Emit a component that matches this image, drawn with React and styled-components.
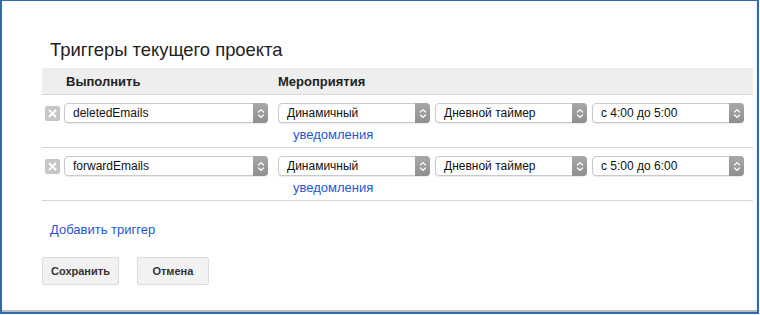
import React from "react";
import styled, { createGlobalStyle } from "styled-components";

const GlobalStyle = createGlobalStyle`
  html, body {
    margin: 0;
    padding: 0;
    background: #ffffff;
  }
  body {
    font-family: "Liberation Sans", Arial, sans-serif;
    color: #222;
  }
`;

const triggers = [
  { id: 1, fn: "deletedEmails", time: "с 4:00 до 5:00" },
  { id: 2, fn: "forwardEmails", time: "с 5:00 до 6:00" },
];

function Stepper() {
  return (
    <StepperBox>
      <svg width="8" height="11" viewBox="0 0 8 11">
        <path
          d="M1.5 4 L4 1.6 L6.5 4 M1.5 7 L4 9.4 L6.5 7"
          fill="none"
          stroke="#fff"
          strokeWidth="1.3"
          strokeLinecap="round"
          strokeLinejoin="round"
        />
      </svg>
    </StepperBox>
  );
}

function Select({ value }) {
  return (
    <SelectBox>
      <SelectLabel>{value}</SelectLabel>
      <Stepper />
    </SelectBox>
  );
}

function RemoveButton() {
  return (
    <RemoveBox>
      <svg width="9" height="9" viewBox="0 0 9 9">
        <path d="M1.5 1.5 L7.5 7.5 M7.5 1.5 L1.5 7.5" stroke="#fff" strokeWidth="2" strokeLinecap="round" />
      </svg>
    </RemoveBox>
  );
}

export default function App() {
  return (
    <>
      <GlobalStyle />
      <Frame>
        <Title>Триггеры текущего проекта</Title>
        <Table>
          <HeaderRow>
            <span />
            <HeadCell>Выполнить</HeadCell>
            <HeadCell>Мероприятия</HeadCell>
          </HeaderRow>
          {triggers.map((t) => (
            <TriggerRow key={t.id}>
              <RemoveButton />
              <Select value={t.fn} />
              <Select value="Динамичный" />
              <Select value="Дневной таймер" />
              <Select value={t.time} />
              <span />
              <span />
              <NotifyLink>уведомления</NotifyLink>
            </TriggerRow>
          ))}
        </Table>
        <AddLink>Добавить триггер</AddLink>
        <Actions>
          <Button>Сохранить</Button>
          <Button>Отмена</Button>
        </Actions>
      </Frame>
    </>
  );
}

const Frame = styled.div`
  box-sizing: border-box;
  width: 759px;
  height: 314px;
  border: solid #2b6cb3;
  border-width: 1px 2px 2px 2px;
  box-shadow: inset 0 -2px 0 #b9bcc0, inset -1px 0 0 #eeeeee;
  padding: 37px 4px 0 40px;
  overflow: hidden;
`;

const Title = styled.h1`
  margin: 0 0 6px 8px;
  font-size: 18.4px;
  line-height: 24px;
  font-weight: normal;
  color: #222;
`;

const Table = styled.div`
  display: flex;
  flex-direction: column;
`;

const columns = "22px 214px 157px 157px 152px";

const HeaderRow = styled.div`
  display: grid;
  grid-template-columns: ${columns};
  align-items: center;
  height: 26px;
  background: #eeeeee;
  border-bottom: 1px solid #d6d6d6;
`;

const HeadCell = styled.div`
  font-size: 13px;
  font-weight: bold;
  color: #222;
  padding-left: 2px;
  &:nth-child(3) {
    padding-left: 0;
  }
`;

const TriggerRow = styled.div`
  display: grid;
  grid-template-columns: ${columns};
  align-items: center;
  padding: 8px 0 4px;
  border-bottom: 1px solid #d6d6d6;
`;

const RemoveBox = styled.div`
  display: flex;
  align-items: center;
  justify-content: center;
  width: 15px;
  height: 15px;
  margin-left: 3px;
  background: #c6c6c6;
  border-radius: 2px;
`;

const SelectBox = styled.div`
  box-sizing: border-box;
  display: flex;
  align-items: stretch;
  height: 20px;
  margin-right: 5px;
  background: #fff;
  border: 1px solid #c9c9c9;
  border-radius: 4px;
  box-shadow: 0 1px 1px rgba(0, 0, 0, 0.08);
  &:nth-child(2) {
    margin-right: 10px;
  }
  &:nth-child(5) {
    margin-right: 0;
  }
`;

const SelectLabel = styled.span`
  flex: 1;
  padding-left: 8px;
  font-size: 12px;
  line-height: 18px;
  color: #111;
  white-space: nowrap;
  overflow: hidden;
`;

const StepperBox = styled.span`
  display: flex;
  align-items: center;
  justify-content: center;
  width: 15px;
  margin: -1px -1px -1px 0;
  background: linear-gradient(#a9a9a9, #8e8e8e);
  border-radius: 0 4px 4px 0;
`;

const NotifyLink = styled.a`
  grid-column: 3 / span 2;
  margin-top: 4px;
  padding-left: 15px;
  font-size: 13px;
  line-height: 16px;
  color: #1f56d2;
  cursor: pointer;
`;

const AddLink = styled.a`
  display: block;
  margin: 21px 0 0 8px;
  font-size: 13px;
  line-height: 16px;
  color: #1f56d2;
  cursor: pointer;
`;

const Actions = styled.div`
  display: flex;
  gap: 18px;
  margin-top: 19px;
`;

const Button = styled.button`
  height: 28px;
  min-width: 72px;
  padding: 0 8px;
  background: #f2f2f2;
  border: 1px solid #dcdcdc;
  border-radius: 2px;
  font-family: "Liberation Sans", Arial, sans-serif;
  font-size: 11px;
  font-weight: bold;
  color: #333;
  cursor: pointer;
`;
